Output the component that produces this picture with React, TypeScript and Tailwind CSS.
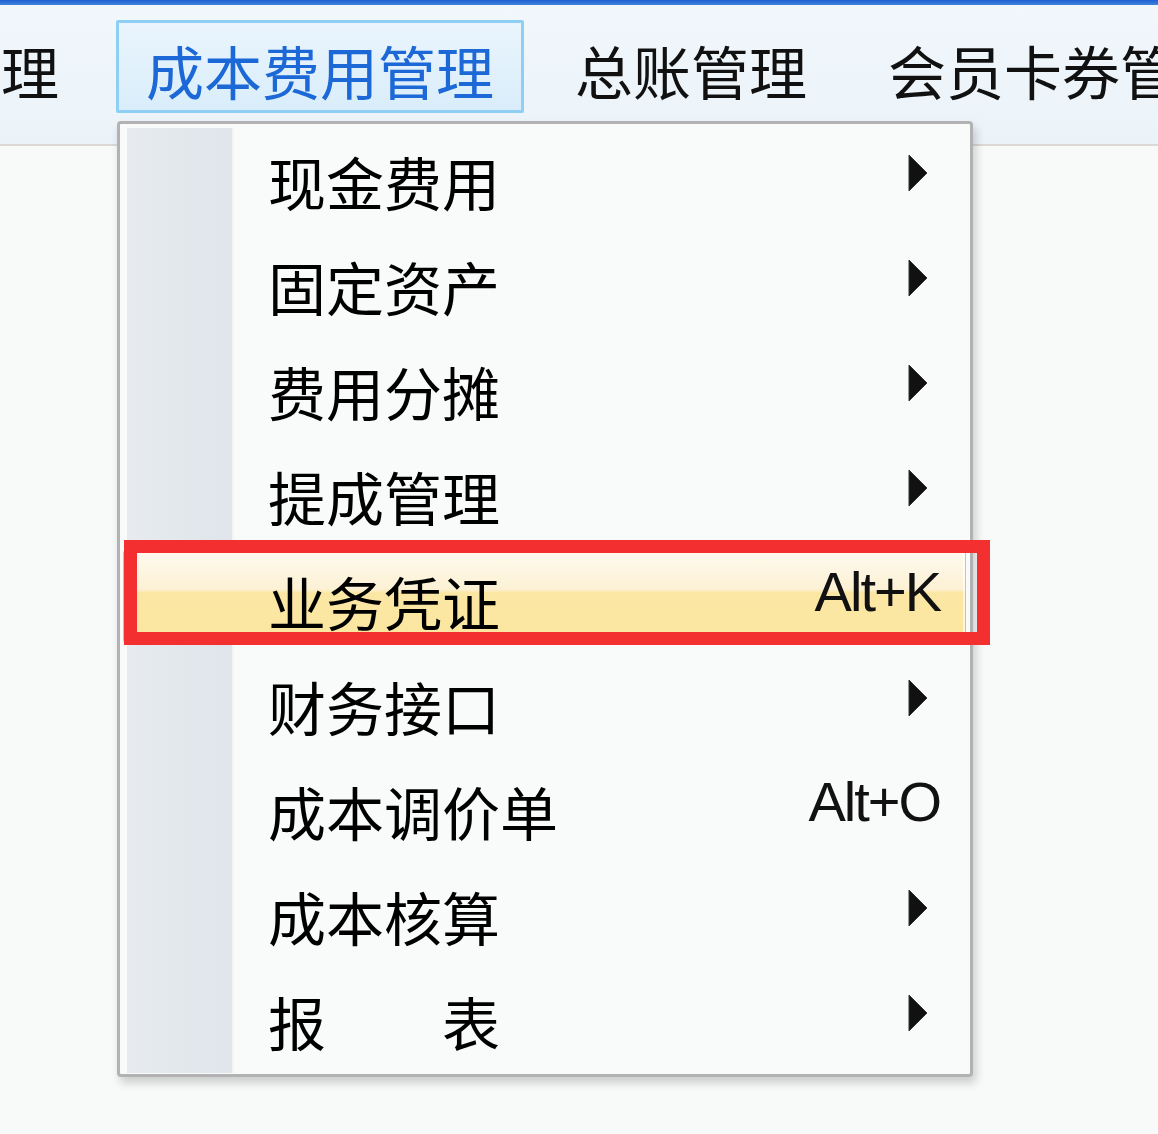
import React from "react";

type Row = { label: string; arrow?: boolean; shortcut?: string; active?: boolean };

const rows: Row[] = [
  { label: "现金费用", arrow: true },
  { label: "固定资产", arrow: true },
  { label: "费用分摊", arrow: true },
  { label: "提成管理", arrow: true },
  { label: "业务凭证", shortcut: "Alt+K", active: true },
  { label: "财务接口", arrow: true },
  { label: "成本调价单", shortcut: "Alt+O" },
  { label: "成本核算", arrow: true },
  { label: "报　　表", arrow: true },
];

const menus = [
  { label: "成本费用管理", active: true },
  { label: "总账管理" },
  { label: "会员卡券管理" },
];

function Arrow() {
  return (
    <svg width="20" height="38" viewBox="0 0 20 38" className="mr-[12px] mb-[15px] shrink-0">
      <polygon points="1,1 19,19 1,37" fill="#111" stroke="#333" strokeWidth="1" strokeLinejoin="round" />
    </svg>
  );
}

function Shortcut({ text }: { text: string }) {
  return (
    <span className="font-['Liberation_Sans',Arial,sans-serif] text-[56px] leading-[56px] tracking-[-2px] text-[#111] mb-[18px]">
      {text}
    </span>
  );
}

export default function App() {
  return (
    <div className="relative w-[1158px] h-[1134px] overflow-hidden bg-[#f8fafa] font-['Noto_Sans_CJK_SC','Noto_Sans',sans-serif]">
      {/* top blue stripe */}
      <div className="h-[5px] bg-[linear-gradient(to_bottom,#1e5fcf,#3f84de)]" />
      {/* menubar */}
      <div className="h-[141px] bg-[linear-gradient(to_bottom,#f1f7fb,#ebf3f9)] border-b-[2px] border-[#dbd8d5] pt-[15px]">
        <div className="flex whitespace-nowrap">
          <div className="h-[93px] pt-[21px] pl-[1px] w-[116px] shrink-0">
            <span className="block text-[58px] leading-[58px] text-[#111]">理</span>
          </div>
          <div className="flex gap-[21px]">
            {menus.map((m) => (
              <div
                key={m.label}
                className={
                  m.active
                    ? "h-[93px] px-[27px] pt-[18px] border-[3px] border-[#8fcff3] rounded-[2px] bg-[linear-gradient(to_bottom,#eaf5fd,#d9edfa)]"
                    : "h-[93px] px-[27px] pt-[18px] border-[3px] border-transparent"
                }
              >
                <span
                  className={
                    m.active
                      ? "block text-[58px] leading-[58px] text-[#1c68d6]"
                      : "block text-[58px] leading-[58px] text-[#111]"
                  }
                >
                  {m.label}
                </span>
              </div>
            ))}
          </div>
        </div>
      </div>

      {/* dropdown menu */}
      <div className="absolute left-[117px] top-[121px] w-[856px] border-[3px] border-[#b2b2b2] rounded-[4px] bg-[#f9fafa] pt-[4px] pb-[1px] shadow-[3px_6px_10px_rgba(0,0,0,0.18)]">
        <div className="bg-[linear-gradient(90deg,transparent_7px,#e7ebef_7px,#dfe5ea_112px,#f2f4f6_112px,#f2f4f6_114px,transparent_114px)]">
          {rows.map((r) =>
            r.active ? (
              <div key={r.label} className="h-[105px] pt-[2px] pl-[3px] pr-[4px]">
                <div className="h-[93px] pt-[8px] flex items-center pl-[144px] pr-[25px] border border-[#e2c36a] rounded-[3px] shadow-[inset_0_0_0_2px_rgba(255,255,255,0.6)] bg-[linear-gradient(to_bottom,#fefaef_0%,#fcf1d4_42%,#fbe7a4_46%,#fbe6a0_100%)]">
                  <span className="text-[58px] leading-[58px] text-black">{r.label}</span>
                  <div className="flex-1" />
                  {r.shortcut && <Shortcut text={r.shortcut} />}
                </div>
              </div>
            ) : (
              <div key={r.label} className="h-[105px] flex items-center pl-[148px] pr-[30px]">
                <span className="text-[58px] leading-[58px] text-black whitespace-pre">{r.label}</span>
                <div className="flex-1" />
                {r.shortcut && <Shortcut text={r.shortcut} />}
                {r.arrow && <Arrow />}
              </div>
            )
          )}
        </div>
      </div>

      {/* red annotation box */}
      <div className="absolute left-[124px] top-[540px] w-[866px] h-[105px] border-[13px] border-[#f42f2f]" />
    </div>
  );
}
